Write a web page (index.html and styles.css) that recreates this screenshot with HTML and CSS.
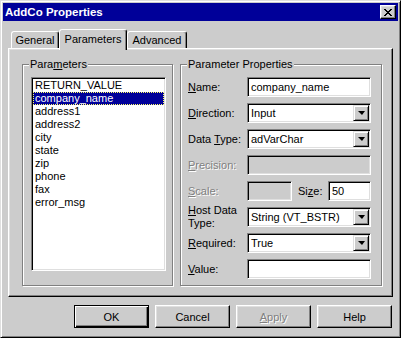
FILE: index.html
```html
<!DOCTYPE html>
<html lang="en-US">
<head>
    <meta charset="utf-8">
    <title>AddCo Properties</title>
    <link rel="stylesheet" href="styles.css">
</head>
<body>
    <div class="window">
        <div class="titlebar">
            <span class="title">AddCo Properties</span>
            <button type="button" class="close">
                <svg width="8" height="7" viewBox="0 0 8 7" shape-rendering="crispEdges">
                    <rect x="0" y="0" width="2" height="1"/><rect x="6" y="0" width="2" height="1"/>
                    <rect x="1" y="1" width="2" height="1"/><rect x="5" y="1" width="2" height="1"/>
                    <rect x="2" y="2" width="4" height="1"/>
                    <rect x="3" y="3" width="2" height="1"/>
                    <rect x="2" y="4" width="4" height="1"/>
                    <rect x="1" y="5" width="2" height="1"/><rect x="5" y="5" width="2" height="1"/>
                    <rect x="0" y="6" width="2" height="1"/><rect x="6" y="6" width="2" height="1"/>
                </svg>
            </button>
        </div>

        <div class="content">
            <div class="tabs">
                <div class="tab tab-general">General</div>
                <div class="tab tab-params active">Parameters</div>
                <div class="tab tab-advanced">Advanced</div>
            </div>

            <div class="panel">
                <div class="group params">
                    <div class="legend">Para<u>m</u>eters</div>
                    <div class="listbox">
                        <div class="item">RETURN_VALUE</div>
                        <div class="item selected">company_name</div>
                        <div class="item">address1</div>
                        <div class="item">address2</div>
                        <div class="item">city</div>
                        <div class="item">state</div>
                        <div class="item">zip</div>
                        <div class="item">phone</div>
                        <div class="item">fax</div>
                        <div class="item">error_msg</div>
                    </div>
                </div>

                <div class="group props">
                    <div class="legend">Parameter Properties</div>

                    <div class="row">
                        <label><u>N</u>ame:</label>
                        <div class="field">company_name</div>
                    </div>
                    <div class="row">
                        <label><u>D</u>irection:</label>
                        <div class="field select">Input<span class="drop"><span class="arrow"></span></span></div>
                    </div>
                    <div class="row">
                        <label>Data <u>T</u>ype:</label>
                        <div class="field select">adVarChar<span class="drop"><span class="arrow"></span></span></div>
                    </div>
                    <div class="row">
                        <label class="off"><u>P</u>recision:</label>
                        <div class="field disabled"></div>
                    </div>
                    <div class="row">
                        <label class="off"><u>S</u>cale:</label>
                        <div class="field disabled small-scale"></div>
                        <label class="size-label">Si<u>z</u>e:</label>
                        <div class="field small-size">50</div>
                    </div>
                    <div class="row">
                        <label class="two-line"><u>H</u>ost Data<br>Type:</label>
                        <div class="field select">String (VT_BSTR)<span class="drop"><span class="arrow"></span></span></div>
                    </div>
                    <div class="row">
                        <label><u>R</u>equired:</label>
                        <div class="field select">True<span class="drop"><span class="arrow"></span></span></div>
                    </div>
                    <div class="row">
                        <label><u>V</u>alue:</label>
                        <div class="field"></div>
                    </div>
                </div>
            </div>

            <div class="buttons">
                <button type="button" class="btn default">OK</button>
                <button type="button" class="btn">Cancel</button>
                <button type="button" class="btn off"><u>A</u>pply</button>
                <button type="button" class="btn">Help</button>
            </div>
        </div>
    </div>
</body>
</html>
```

FILE: styles.css
```css
body {
    margin: 0;
    background-color: #cccccc;
    font-family: "Liberation Sans", Arial, sans-serif;
    font-size: 11px;
    color: #000;
}

.window {
    width: 401px;
    height: 338px;
    box-sizing: border-box;
    background-color: #cccccc;
    border: 1px solid;
    border-color: #dfdfdf #000 #000 #dfdfdf;
    box-shadow: inset 1px 1px 0 #fff, inset -1px -1px 0 #808080;
    padding: 2px;
}

.titlebar {
    height: 18px;
    background-color: #000099;
    display: flex;
    align-items: center;
    justify-content: space-between;
    padding: 0 2px;
}

.title {
    color: #fff;
    font-weight: bold;
    font-size: 11.5px;
}

.close {
    width: 16px;
    height: 14px;
    box-sizing: border-box;
    padding: 0;
    background-color: #cccccc;
    border: 1px solid;
    border-color: #fff #000 #000 #fff;
    box-shadow: inset -1px -1px 0 #808080, inset 1px 1px 0 #dfdfdf;
    display: flex;
    align-items: center;
    justify-content: center;
}

.content {
    padding: 0 5px;
}

/* tab strip */
.tabs {
    display: flex;
    align-items: flex-end;
    height: 19px;
    margin-top: 8px;
    padding-left: 3px;
}

.tab {
    height: 17px;
    box-sizing: border-box;
    border: 1px solid;
    border-bottom: none;
    border-color: #fff #000 transparent #fff;
    border-radius: 3px 3px 0 0;
    box-shadow: inset -1px 0 0 #808080;
    display: flex;
    align-items: center;
    justify-content: center;
}

.tab-general { width: 48px; }
.tab-params { width: 68px; }
.tab-advanced { width: 60px; }

.tab.active {
    height: 21px;
    margin-bottom: -2px;
    position: relative;
    z-index: 1;
    background-color: #cccccc;
    padding-bottom: 3px;
}

.panel {
    height: 249px;
    box-sizing: border-box;
    border: 1px solid;
    border-color: #fff #000 #000 #fff;
    box-shadow: inset -1px -1px 0 #808080, inset 1px 1px 0 #dfdfdf;
    padding: 15px 10px 10px 13px;
    display: flex;
    gap: 7px;
}

/* etched group boxes */
.group {
    position: relative;
    box-sizing: border-box;
    height: 222px;
    border: 1px solid #808080;
    box-shadow: inset 1px 1px 0 #fff, 1px 1px 0 #fff;
}

.params {
    width: 151px;
    padding: 12px 0 0 8px;
}

.props {
    width: 202px;
    padding: 12px 10px 0 7px;
    display: flex;
    flex-direction: column;
    gap: 6px;
}

.legend {
    position: absolute;
    top: -7px;
    left: 6px;
    padding: 0 1px;
    background-color: #cccccc;
    line-height: 13px;
}

.listbox {
    width: 135px;
    height: 194px;
    box-sizing: border-box;
    background-color: #fff;
    border: 1px solid;
    border-color: #808080 #fff #fff #808080;
    box-shadow: inset 1px 1px 0 #000, inset -1px -1px 0 #dfdfdf;
    padding: 1px;
}

.item {
    height: 13px;
    line-height: 13px;
    padding-left: 2px;
    white-space: nowrap;
}

.item.selected {
    background-color: #000099;
    color: #fff;
    outline: 1px dotted #ffff66;
    outline-offset: -1px;
}

.row {
    display: flex;
    align-items: center;
    height: 20px;
}

.row label {
    width: 59px;
    flex: none;
}

.row .two-line {
    line-height: 13px;
}

.off {
    color: #808080;
    text-shadow: 1px 1px 0 #fff;
}

.field {
    width: 124px;
    height: 20px;
    box-sizing: border-box;
    background-color: #fff;
    border: 1px solid;
    border-color: #808080 #fff #fff #808080;
    box-shadow: inset 1px 1px 0 #000, inset -1px -1px 0 #dfdfdf;
    padding: 0 2px 0 3px;
    display: flex;
    align-items: center;
    white-space: nowrap;
}

.field.disabled {
    background-color: #cccccc;
}

.field.select {
    padding-right: 1px;
}

.small-scale {
    width: 45px;
}

.row .size-label {
    width: 30px;
    margin-left: 6px;
}

.small-size {
    width: 43px;
}

.drop {
    margin-left: auto;
    width: 16px;
    height: 16px;
    box-sizing: border-box;
    background-color: #cccccc;
    border: 1px solid;
    border-color: #dfdfdf #000 #000 #dfdfdf;
    box-shadow: inset 1px 1px 0 #fff, inset -1px -1px 0 #808080;
    display: flex;
    align-items: center;
    justify-content: center;
}

.arrow {
    width: 0;
    height: 0;
    border-left: 4px solid transparent;
    border-right: 3px solid transparent;
    border-top: 4px solid #000;
    margin-left: 1px;
}

/* dialog buttons */
.buttons {
    display: flex;
    justify-content: flex-end;
    gap: 6px;
    margin-top: 8px;
    padding-right: 1px;
}

.btn {
    width: 75px;
    height: 23px;
    box-sizing: border-box;
    padding: 0;
    font: inherit;
    color: #000;
    background-color: #cccccc;
    border: 1px solid;
    border-color: #fff #000 #000 #fff;
    box-shadow: inset -1px -1px 0 #808080, inset 1px 1px 0 #dfdfdf;
}

.btn.default {
    border-color: #000;
    box-shadow: inset 1px 1px 0 #fff, inset -1px -1px 0 #000, inset -2px -2px 0 #808080;
}

.btn.off {
    color: #808080;
    text-shadow: 1px 1px 0 #fff;
}
```
